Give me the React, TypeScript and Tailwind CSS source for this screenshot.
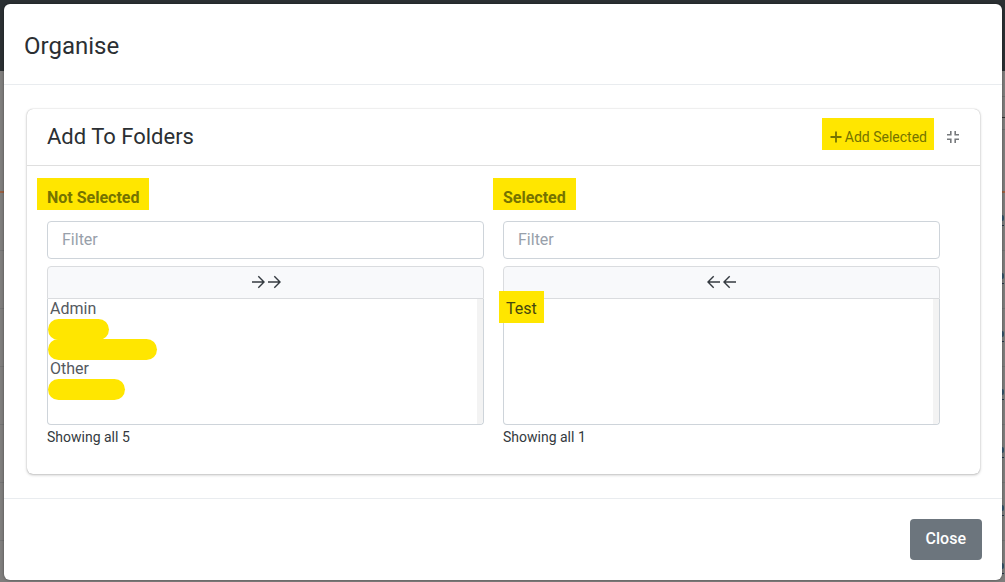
import React from "react";

const rows = [0, 1, 2, 3, 4, 5, 6];

function CompressIcon() {
  return (
    <svg viewBox="0 0 14 14" className="size-3.5" fill="none" stroke="#777a7d" strokeWidth="1.6" aria-hidden="true">
      <path d="M4.8 1v3.8H1M9.2 1v3.8H13M4.8 13V9.2H1M9.2 13V9.2H13" />
    </svg>
  );
}

function PlusIcon() {
  return (
    <svg viewBox="0 0 14 14" className="size-3.5" fill="none" stroke="currentColor" strokeWidth="1.8" aria-hidden="true">
      <path d="M7 1.5v11M1.5 7h11" />
    </svg>
  );
}

function ArrowIcon({ forward }: { forward: boolean }) {
  return (
    <svg viewBox="0 0 16 16" className="size-4" fill="none" stroke="currentColor" strokeWidth="1.4" aria-hidden="true">
      <path d={forward ? "M2 8h12M8.3 2.3L14 8l-5.7 5.7" : "M14 8h-12M7.7 2.3L2 8l5.7 5.7"} />
    </svg>
  );
}

function PageBehind() {
  return (
    <div aria-hidden="true" className="absolute inset-0 -z-10 overflow-hidden bg-[#7f7e7d]">
      <div className="h-[71px] bg-[#2b3033]" />
      <div className="flex h-[122px] flex-col items-end border-b-2 border-[#9a6143]">
        <div className="mt-[25px] h-px w-1 bg-[#707070]" />
        <div className="mt-5 h-px w-1 bg-[#333333]" />
        <div className="mt-[11px] h-px w-1 bg-[#707070]" />
      </div>
      {rows.map((r) => (
        <div key={r} className="flex h-[58px] flex-col items-end border-b border-[#747474]">
          <div className="mt-[22px] mr-px h-1.5 w-0.5 rounded-r-full bg-[#35536b]" />
          <div className="mt-1 mr-px h-px w-0.5 bg-[#26364a]" />
        </div>
      ))}
    </div>
  );
}

type Item = { name?: string; width?: string; marked?: boolean };

function ListColumn(props: {
  id: string;
  title: string;
  items: Item[];
  moveLabel: string;
  count: number;
  forward: boolean;
}) {
  return (
    <div className="min-w-0 flex-1">
      <label
        htmlFor={props.id}
        className="-ml-2.5 mb-[11px] inline-block h-8 bg-[#ffe600] px-2.5 leading-10 font-bold text-[#757300]"
      >
        {props.title}
      </label>
      <input
        id={props.id}
        type="text"
        placeholder="Filter"
        className="mb-[7px] block h-[38px] w-full rounded border border-[#ced4da] bg-white px-3.5 pb-0.5 text-[#495057] outline-none placeholder:text-[#98a0aa]"
      />
      <button
        type="button"
        aria-label={props.moveLabel}
        className="flex h-[33px] w-full items-center justify-center rounded-t border border-[#dadcdf] bg-[#f8f9fb] pb-0.5 text-[#343a40]"
      >
        <ArrowIcon forward={props.forward} />
        <ArrowIcon forward={props.forward} />
      </button>
      <div className="flex h-[126px] rounded-b border border-t-0 border-[#ced4da]">
        <ul className="flex-1 leading-5 text-[#54595f]">
          {props.items.map((item, i) => (
            <li key={i} className="h-5">
              {item.name === undefined ? (
                <span className={`block h-[21px] rounded-full bg-[#ffe600] ${item.width}`} />
              ) : item.marked ? (
                <span className="-mt-2 -ml-[5px] inline-block h-8 bg-[#ffe600] px-[7px] leading-9 text-[#45470f]">
                  {item.name}
                </span>
              ) : (
                <span className="pl-0.5">{item.name}</span>
              )}
            </li>
          ))}
        </ul>
        <div className="w-1.5 rounded-br-sm bg-[#f3f3f3]" />
      </div>
      <p className="text-sm leading-6 text-[#343a40]">Showing all {props.count}</p>
    </div>
  );
}

export default function App() {
  return (
    <div className="relative isolate min-h-screen pt-1 pr-[3px] pb-0.5 pl-1 font-[Roboto,sans-serif] text-base">
      <PageBehind />
      <div role="dialog" aria-labelledby="dialog-title" className="rounded-md bg-white shadow-[0_0_3px_#0006]">
        <header className="flex h-[81px] items-center border-b border-[#e9ecef] px-5 pt-1">
          <h1 id="dialog-title" className="text-2xl leading-9 text-[#2b2f33]">Organise</h1>
        </header>
        <div className="px-[22px] pt-6 pb-6">
          <section className="ml-px rounded-md bg-white pb-[25px] shadow-[0_0_1px_rgba(0,0,0,0.3),0_1px_3px_rgba(0,0,0,0.25)]">
            <div className="flex h-[57px] items-center border-b border-[#dfdfdf] pl-5">
              <h2 className="pb-0.5 text-[22px] text-[#2b2f33]">Add To Folders</h2>
              <button
                type="button"
                className="mr-3 mb-1.5 ml-auto flex h-8 items-center gap-0.5 bg-[#ffe600] px-[7px] pt-1.5 text-sm text-[#757300]"
              >
                <PlusIcon />
                Add Selected
              </button>
              <button type="button" aria-label="Collapse" className="mr-5">
                <CompressIcon />
              </button>
            </div>
            <div className="flex gap-[19px] pt-3 pr-10 pl-5">
              <ListColumn
                id="filter-available"
                title="Not Selected"
                moveLabel="Select all"
                forward
                count={5}
                items={[
                  { name: "Admin" },
                  { width: "w-[61px]" },
                  { width: "w-[109px]" },
                  { name: "Other" },
                  { width: "w-[77px]" },
                ]}
              />
              <ListColumn
                id="filter-selected"
                title="Selected"
                moveLabel="Remove all"
                forward={false}
                count={1}
                items={[{ name: "Test", marked: true }]}
              />
            </div>
          </section>
        </div>
        <footer className="flex h-[82px] items-center justify-end border-t border-[#e9ecef] px-5">
          <button type="button" className="h-[41px] rounded bg-[#6c757d] px-4 pb-0.5 font-medium text-white">
            Close
          </button>
        </footer>
      </div>
    </div>
  );
}
